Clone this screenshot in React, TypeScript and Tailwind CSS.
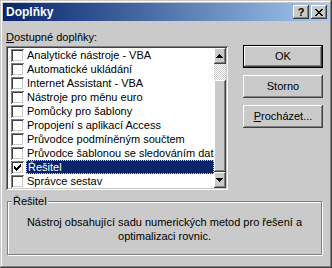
import React from 'react'

const raised =
  'shadow-[inset_-1px_-1px_#404040,inset_1px_1px_#fff,inset_-2px_-2px_#808080,inset_2px_2px_#cacaca] bg-[#cacaca]'
const sunken =
  'shadow-[inset_1px_1px_#808080,inset_-1px_-1px_#fff,inset_2px_2px_#404040,inset_-2px_-2px_#cacaca]'

const items = [
  'Analytické nástroje - VBA',
  'Automatické ukládání',
  'Internet Assistant - VBA',
  'Nástroje pro měnu euro',
  'Pomůcky pro šablony',
  'Propojení s aplikací Access',
  'Průvodce podmíněným součtem',
  'Průvodce šablonou se sledováním dat',
  'Řešitel',
  'Správce sestav',
]

function CheckBox({ checked }: { checked: boolean }) {
  return (
    <span className={`w-[13px] h-[13px] bg-white shrink-0 flex items-center justify-center ${sunken}`}>
      {checked && (
        <svg width="7" height="7" viewBox="0 0 7 7" shapeRendering="crispEdges">
          <path
            fill="#000"
            d="M6 0h1v1h-1z M5 1h2v1h-2z M0 2h1v1h-1z M4 2h3v1h-3z M0 3h2v1h-2z M3 3h3v1h-3z M0 4h5v1h-5z M1 5h3v1h-3z M2 6h1v1h-1z"
          />
        </svg>
      )}
    </span>
  )
}

function Arrow({ down }: { down?: boolean }) {
  return (
    <svg width="7" height="4" viewBox="0 0 7 4" shapeRendering="crispEdges" className={down ? 'rotate-180' : ''}>
      <path fill="#000" d="M3 0h1v1h-1z M2 1h3v1h-3z M1 2h5v1h-5z M0 3h7v1h-7z" />
    </svg>
  )
}

function DialogButton({ children, isDefault }: { children: React.ReactNode; isDefault?: boolean }) {
  if (isDefault) {
    return (
      <div className="h-[23px] border border-black">
        <div className={`h-full flex items-center justify-center ${raised}`}>{children}</div>
      </div>
    )
  }
  return <div className={`h-[23px] flex items-center justify-center ${raised}`}>{children}</div>
}

export default function App() {
  return (
    <div
      className="w-[332px] h-[268px] bg-[#cacaca] p-[3px] flex flex-col text-[11px] text-black font-['Liberation_Sans',Arial,sans-serif] shadow-[inset_-1px_-1px_#404040,inset_1px_1px_#cacaca,inset_-2px_-2px_#808080,inset_2px_2px_#fff]"
    >
      {/* title bar */}
      <div className="h-[18px] flex items-center pl-[3px] pr-[2px] bg-gradient-to-r from-[#0a246a] to-[#a6caf0]">
        <span className="flex-1 text-white font-bold text-[12px] leading-none">Doplňky</span>
        <div className={`w-[16px] h-[14px] mr-[2px] flex items-center justify-center font-bold text-[11px] leading-none ${raised}`}>
          ?
        </div>
        <div className={`w-[16px] h-[14px] flex items-center justify-center ${raised}`}>
          <svg width="8" height="7" viewBox="0 0 8 7" shapeRendering="crispEdges">
            <path
              fill="#000"
              d="M0 0h2v1h-2z M6 0h2v1h-2z M1 1h2v1h-2z M5 1h2v1h-2z M2 2h4v1h-4z M3 3h2v1h-2z M2 4h4v1h-4z M1 5h2v1h-2z M5 5h2v1h-2z M0 6h2v1h-2z M6 6h2v1h-2z"
            />
          </svg>
        </div>
      </div>

      <div className="flex pl-[3px] pt-[9px]">
        <div className="w-[222px]">
          <div className="h-[16px] leading-[14px]">
            <span className="underline">D</span>ostupné doplňky:
          </div>
          <div className={`h-[144px] p-[2px] bg-white flex ${sunken}`}>
            <div className="flex-1 flex flex-col">
              {items.map((item, i) => {
                const selected = item === 'Řešitel'
                return (
                  <div key={i} className="h-[14px] flex items-center">
                    <span className="ml-[3px]">
                      <CheckBox checked={selected} />
                    </span>
                    <span
                      className={
                        selected
                          ? 'ml-[2px] flex-1 h-[14px] pl-[1px] leading-[12px] bg-[#0a246a] text-white border border-dotted border-[#d8d890]'
                          : 'ml-[2px] flex-1 pl-[1px] leading-[14px] whitespace-nowrap'
                      }
                    >
                      {item}
                    </span>
                  </div>
                )
              })}
            </div>
            {/* scrollbar */}
            <div className="w-[16px] flex flex-col">
              <div className={`h-[16px] flex items-center justify-center ${raised}`}>
                <Arrow />
              </div>
              <div className="h-[16px] bg-[image:repeating-conic-gradient(#fff_0_25%,#cacaca_0_50%)] bg-[length:2px_2px]" />
              <div className={`flex-1 ${raised}`} />
              <div className={`h-[16px] flex items-center justify-center ${raised}`}>
                <Arrow down />
              </div>
            </div>
          </div>
        </div>

        <div className="ml-[15px] mt-[15px] w-[80px] flex flex-col gap-[7px]">
          <DialogButton isDefault>OK</DialogButton>
          <DialogButton>Storno</DialogButton>
          <DialogButton>
            <span>
              <span className="underline">P</span>rocházet...
            </span>
          </DialogButton>
        </div>
      </div>

      <fieldset className="mt-[4px] ml-[4px] w-[315px] h-[61px] border border-[#808080] shadow-[inset_1px_1px_#fff,1px_1px_#fff]">
        <legend className="ml-[4px] px-[1px] leading-[14px] bg-[#cacaca]">Řešitel</legend>
        <div className="pt-[7px] text-center leading-[14px]">
          Nástroj obsahující sadu numerických metod pro řešení a
          <br />
          optimalizaci rovnic.
        </div>
      </fieldset>
    </div>
  )
}
